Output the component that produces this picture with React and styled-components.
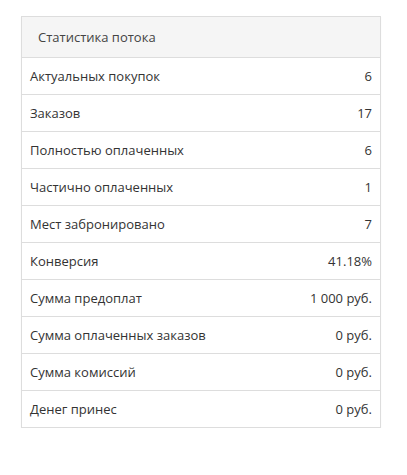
import React from "react";
import styled, { createGlobalStyle } from "styled-components";

const Global = createGlobalStyle`
  html, body { margin: 0; padding: 0; background: #fff; }
  body { font-family: "Open Sans", Lato, "Liberation Sans", sans-serif; }
`;

const Page = styled.div`
  padding: 16px 26px 0 21px;
`;

const Panel = styled.div`
  width: 358px;
  border: 1px solid #dddddd;
  box-shadow: 0 1px 1px rgba(0, 0, 0, 0.05);
  color: #333;
  font-size: 13px;
`;

const Header = styled.div`
  height: 40px;
  display: flex;
  align-items: center;
  padding: 0 16px;
  background: #f5f5f5;
  border-bottom: 1px solid #dddddd;
  color: #444;
`;

const Row = styled.div`
  height: 36px;
  display: flex;
  align-items: center;
  justify-content: space-between;
  padding: 0 8px;
  & + & { border-top: 1px solid #dddddd; }
`;

const Label = styled.span``;
const Value = styled.span``;

const rows = [
  ["Актуальных покупок", "6"],
  ["Заказов", "17"],
  ["Полностью оплаченных", "6"],
  ["Частично оплаченных", "1"],
  ["Мест забронировано", "7"],
  ["Конверсия", "41.18%"],
  ["Сумма предоплат", "1 000 руб."],
  ["Сумма оплаченных заказов", "0 руб."],
  ["Сумма комиссий", "0 руб."],
  ["Денег принес", "0 руб."],
];

export default function App() {
  return (
    <Page>
      <Global />
      <Panel>
        <Header>Статистика потока</Header>
        {rows.map(([l, v]) => (
          <Row key={l}>
            <Label>{l}</Label>
            <Value>{v}</Value>
          </Row>
        ))}
      </Panel>
    </Page>
  );
}
